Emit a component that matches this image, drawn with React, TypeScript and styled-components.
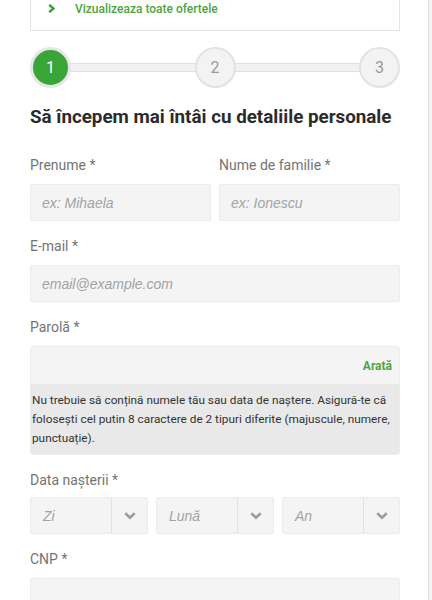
import React from "react";
import styled, { createGlobalStyle } from "styled-components";

const Global = createGlobalStyle`
  html, body { margin: 0; padding: 0; background: #fff; }
  body { font-family: Roboto, "Liberation Sans", Arial, sans-serif; }
  * { box-sizing: border-box; }
`;

const Page = styled.div`
  display: flex;
  width: 432px;
  min-height: 600px;
`;

const Main = styled.div`
  width: 428px;
  padding: 0 28px 0 30px;
`;

const Rail = styled.div`
  flex: 1;
  border-left: 1px solid #dcdcdc;
  background: #f4f4f4;
`;

const Content = styled.div`
  width: 370px;
  display: flex;
  flex-direction: column;
`;

const OffersBox = styled.div`
  height: 31px;
  border: 1px solid #e4e4e4;
  border-top: none;
  display: flex;
  align-items: flex-start;
  padding: 0 0 0 17px;
`;

const OffersLink = styled.a`
  display: flex;
  align-items: center;
  gap: 20px;
  height: 17px;
  color: #4ea442;
  font-size: 12px;
  font-weight: 500;
  text-decoration: none;
`;

const Stepper = styled.div`
  display: flex;
  align-items: center;
  margin-top: 16px;
  height: 41px;
`;

const StepCircle = styled.div<{ $active?: boolean }>`
  width: 41px;
  height: 41px;
  flex: none;
  border-radius: 50%;
  display: flex;
  align-items: center;
  justify-content: center;
  font-size: 16px;
  border: ${(p) => (p.$active ? "3px solid #e6e6e6" : "2px solid #e2e2e2")};
  background: ${(p) => (p.$active ? "#38a536" : "#f3f3f3")};
  color: ${(p) => (p.$active ? "#fff" : "#9a9a9a")};
  position: relative;
  z-index: 1;
`;

const StepLine = styled.div`
  flex: 1;
  height: 9px;
  margin: 0 -2px;
  background: #f1f1f1;
  border-top: 1px solid #e0e0e0;
  border-bottom: 1px solid #e0e0e0;
`;

const Heading = styled.h1`
  margin: 17px 0 0;
  font-size: 18.8px;
  line-height: 24px;
  font-weight: 700;
  color: #2b2b2b;
`;

const Row = styled.div`
  display: flex;
  gap: 8px;
`;

const Field = styled.div<{ $top: number }>`
  flex: 1;
  display: flex;
  flex-direction: column;
  margin-top: ${(p) => p.$top}px;
`;

const Label = styled.label<{ $gap?: number }>`
  font-size: 14px;
  line-height: 18px;
  color: #747474;
  margin-bottom: ${(p) => p.$gap ?? 10}px;
`;

const Input = styled.input`
  height: 37px;
  width: 100%;
  border: 1px solid #ececec;
  border-radius: 2px;
  background: #f4f4f4;
  padding: 0 11px;
  font-size: 14px;
  font-family: "Liberation Sans", Arial, sans-serif;
  outline: none;
  &::placeholder {
    color: #a3a3a3;
    font-style: italic;
  }
`;

const PasswordBox = styled.div`
  border: 1px solid #ececec;
  border-radius: 3px;
  overflow: hidden;
`;

const PasswordTop = styled.div`
  height: 37px;
  background: #f4f4f4;
  display: flex;
  align-items: center;
  justify-content: flex-end;
  padding: 0 7px;
`;

const ShowBtn = styled.span`
  color: #4ea442;
  font-size: 12px;
  font-weight: 700;
`;

const Hint = styled.div`
  background: #e9e9e9;
  color: #333;
  font-size: 11.8px;
  line-height: 19px;
  padding: 7px 2px 6px 1px;
`;

const SelectBox = styled.div`
  flex: 1;
  height: 37px;
  display: flex;
  border: 1px solid #ececec;
  border-radius: 2px;
  background: #f4f4f4;
`;

const SelectValue = styled.div`
  flex: 1;
  display: flex;
  align-items: center;
  padding-left: 12px;
  font-family: "Liberation Sans", Arial, sans-serif;
  font-style: italic;
  font-size: 14px;
  color: #a3a3a3;
`;

const SelectArrow = styled.div`
  width: 36px;
  border-left: 1px solid #e2e2e2;
  display: flex;
  align-items: center;
  justify-content: center;
`;

const Chevron = ({ color }: { color: string }) => (
  <svg width="12" height="8" viewBox="0 0 12 8">
    <path d="M1.3 1.3 L6 5.8 L10.7 1.3" fill="none" stroke={color} strokeWidth="2.6" />
  </svg>
);

const RightChevron = () => (
  <svg width="7" height="9" viewBox="0 0 7 9">
    <path d="M1.2 0.8 L5.4 4.5 L1.2 8.2" fill="none" stroke="#3f9e3a" strokeWidth="2.4" />
  </svg>
);

const DateSelect = ({ text }: { text: string }) => (
  <SelectBox>
    <SelectValue>{text}</SelectValue>
    <SelectArrow>
      <Chevron color="#9c9c9c" />
    </SelectArrow>
  </SelectBox>
);

export default function App() {
  return (
    <Page>
      <Global />
      <Main>
        <Content>
          <OffersBox>
            <OffersLink href="#">
              <RightChevron />
              Vizualizeaza toate ofertele
            </OffersLink>
          </OffersBox>

          <Stepper>
            <StepCircle $active>1</StepCircle>
            <StepLine />
            <StepCircle>2</StepCircle>
            <StepLine />
            <StepCircle>3</StepCircle>
          </Stepper>

          <Heading>Să începem mai întâi cu detaliile personale</Heading>

          <Row>
            <Field $top={27}>
              <Label>Prenume *</Label>
              <Input placeholder="ex: Mihaela" />
            </Field>
            <Field $top={27}>
              <Label>Nume de familie *</Label>
              <Input placeholder="ex: Ionescu" />
            </Field>
          </Row>

          <Field $top={16}>
            <Label>E-mail *</Label>
            <Input placeholder="email@example.com" />
          </Field>

          <Field $top={16}>
            <Label>Parolă *</Label>
            <PasswordBox>
              <PasswordTop>
                <ShowBtn>Arată</ShowBtn>
              </PasswordTop>
              <Hint>
                Nu trebuie să conțină numele tău sau data de naștere. Asigură-te că folosești cel putin 8
                caractere de 2 tipuri diferite (majuscule, numere, punctuație).
              </Hint>
            </PasswordBox>
          </Field>

          <Field $top={16}>
            <Label $gap={8}>Data nașterii *</Label>
            <Row>
              <DateSelect text="Zi" />
              <DateSelect text="Lună" />
              <DateSelect text="An" />
            </Row>
          </Field>

          <Field $top={16}>
            <Label>CNP *</Label>
            <Input />
          </Field>
        </Content>
      </Main>
      <Rail />
    </Page>
  );
}
